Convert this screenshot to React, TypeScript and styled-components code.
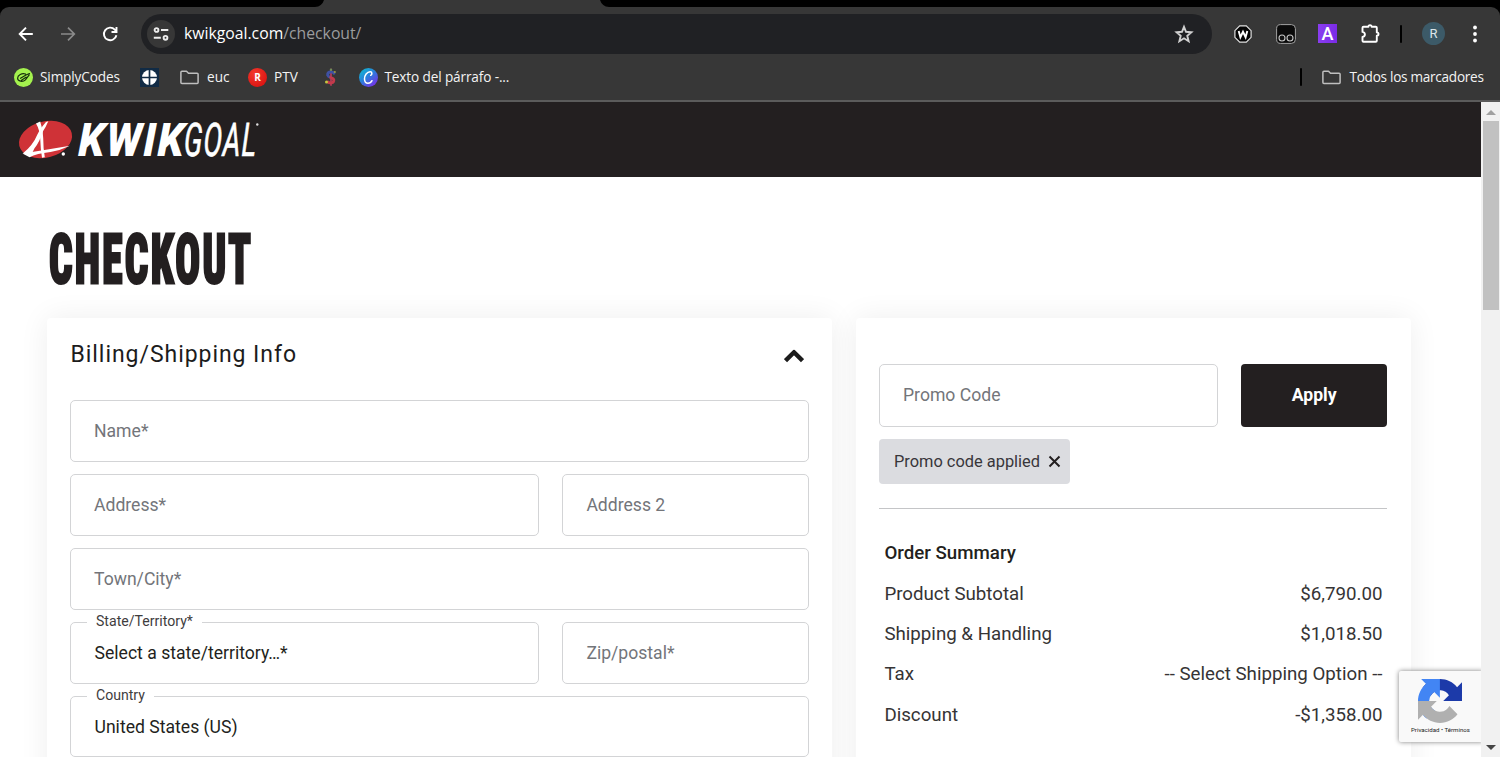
import React from 'react';
import styled, { createGlobalStyle } from 'styled-components';

const Global = createGlobalStyle`
  *, *::before, *::after { box-sizing: border-box; }
  html, body { margin: 0; height: 100%; overflow: hidden; }
  body { background: #fff; font-family: Roboto, "Liberation Sans", sans-serif; color: #231f20; }
`;

const Window = styled.div`
  width: 1500px;
  height: 757px;
  display: flex;
  flex-direction: column;
  overflow: hidden;
`;

/* ---------- browser chrome ---------- */
const TabStrip = styled.div`
  height: 7px;
  flex: none;
  background: #000;
  padding-left: 315px;
  display: flex;
`;
const Chrome = styled.div`
  flex: none;
  height: 95px;
  background: #000;
`;
const ChromeInner = styled.div`
  height: 95px;
  border-radius: 9px 9px 0 0;
  background: #373737;
  border-bottom: 2px solid #5b5b5b;
  font-family: "Open Sans", "Noto Sans", sans-serif;
  color: #fff;
`;
const Toolbar = styled.div`
  height: 53px;
  display: flex;
  align-items: center;
  padding: 0 15px 0 16px;
`;
const NavButtons = styled.div`
  display: flex;
  gap: 22px;
  width: 125px;
  svg { display: block; }
`;
const Omnibox = styled.div`
  width: 1071px;
  height: 40px;
  border-radius: 20px;
  background: #202124;
  display: flex;
  align-items: center;
  padding: 0 18px 0 6px;
`;
const SiteChip = styled.span`
  width: 28px;
  height: 28px;
  border-radius: 50%;
  background: #373737;
  display: grid;
  place-items: center;
  margin-right: 9px;
`;
const Url = styled.span`
  flex: 1;
  margin-top: -1px;
  font-size: 15.75px;
  line-height: 22px;
  color: #9b9c9e;
  b { font-weight: 400; color: #fff; }
`;
const Extensions = styled.div`
  display: flex;
  align-items: center;
  gap: 22.5px;
  padding-left: 21px;
  svg { display: block; }
`;
const ProfileArea = styled.div`
  flex: 1;
  display: flex;
  align-items: center;
  justify-content: flex-end;
  gap: 20px;
  svg { display: block; }
`;
const LetterTile = styled.span`
  width: 19px;
  height: 19px;
  background: linear-gradient(90deg, #8a3df0, #7a2be6);
  font: 500 18px/20px Roboto, sans-serif;
  text-align: center;
`;
const Divider = styled.span`
  width: 2px;
  height: 18px;
  border-radius: 1px;
  background: #000;
`;
const Avatar = styled.span`
  width: 23px;
  height: 23px;
  border-radius: 50%;
  background: #3c5a68;
  color: #dbe6ea;
  font: 400 13px/23px Roboto, sans-serif;
  text-align: center;
`;
const Bookmarks = styled.div`
  height: 34px;
  display: flex;
  align-items: center;
  padding: 0 16px 0 14px;
`;
const Bookmark = styled.div<{ $gap?: number; $end?: number }>`
  display: flex;
  align-items: center;
  gap: ${p => p.$gap ?? 7}px;
  margin-right: ${p => p.$end ?? 20}px;
  svg { display: block; flex: none; }
`;
const BookmarkLabel = styled.span<{ $w: number; $ls?: number }>`
  width: ${p => p.$w}px;
  font-size: 13.6px;
  line-height: 20px;
  margin-top: -1px;
  white-space: nowrap;
  letter-spacing: ${p => p.$ls ?? 0}px;
  color: #f3f3f3;
`;
const Spacer = styled.span`flex: 1;`;
const RoundR = styled.span`
  width: 19px;
  height: 19px;
  border-radius: 50%;
  background: radial-gradient(circle at 35% 30%, #f2382c, #d60b0b);
  font: 700 10px/19px "Open Sans", sans-serif;
  text-align: center;
`;

/* ---------- page ---------- */
const Viewport = styled.div`
  flex: 1;
  min-height: 0;
  display: flex;
`;
const Page = styled.div`
  position: relative;
  width: 1481px;
  overflow: hidden;
`;
const Header = styled.header`
  height: 75px;
  background: #231f20;
  padding: 5px 0 0 14px;
  svg { display: block; }
`;
const Title = styled.h1`
  margin: 43px 0 0 48.5px;
  height: 98px;
  width: 360px;
  font-size: 69px;
  line-height: 80px;
  font-weight: 800;
  font-stretch: 75%;
  letter-spacing: 3.8px;
  -webkit-text-stroke: 3.2px #231f20;
  transform: scaleX(0.598);
  transform-origin: 0 0;
`;
const Columns = styled.div`
  display: flex;
  align-items: flex-start;
  gap: 24px;
  padding-left: 47px;
`;
const Card = styled.section<{ $w: number; $top: number }>`
  width: ${p => p.$w}px;
  height: 520px;
  padding: ${p => p.$top}px 23px 0;
  background: #fff;
  border-radius: 4px;
  box-shadow: 0 0 30px rgba(0, 0, 0, 0.07);
`;
const CardHead = styled.div`
  height: 82px;
  display: flex;
  justify-content: space-between;
  padding: 0 5px 0 0.5px;
  svg { margin-top: 30px; }
`;
const CardTitle = styled.h2`
  margin: 22px 0 0;
  font-size: 23px;
  line-height: 29px;
  font-weight: 450;
  letter-spacing: 0.95px;
  color: #1c1c1c;
`;
const Form = styled.div`
  display: flex;
  flex-direction: column;
  gap: 12px;
`;
const Row = styled.div`
  display: grid;
  grid-template-columns: 469.4px 1fr;
  gap: 23px;
`;
const Field = styled.div<{ $filled?: boolean }>`
  position: relative;
  height: 61.9px;
  border: 1px solid #d3d4d6;
  border-radius: 5px;
  padding-left: ${p => (p.$filled ? 23.5 : 23)}px;
  font-size: 17.6px;
  line-height: 60px;
  color: ${p => (p.$filled ? '#231f20' : '#73757a')};
  background: #fff;
`;
const FloatLabel = styled.span`
  position: absolute;
  left: 16px;
  top: -11px;
  padding: 0 9px;
  background: #fff;
  font-size: 14.1px;
  line-height: 18px;
  color: #3f3d3e;
`;
const PromoRow = styled.div`
  display: grid;
  grid-template-columns: 339px 146.4px;
  gap: 23px;
  ${Field} { height: 62.4px; }
`;
const ApplyButton = styled.button`
  height: 62.4px;
  border: 0;
  border-radius: 4px;
  background: #231f20;
  color: #fff;
  font: 700 17.6px/61px Roboto, sans-serif;
  padding: 0;
`;
const PromoChip = styled.div`
  margin-top: 12px;
  width: 191px;
  height: 45px;
  border-radius: 4px;
  background: #dbdce0;
  padding-left: 15px;
  display: flex;
  align-items: center;
  gap: 8px;
  font-size: 16.4px;
  color: #38363a;
`;
const Rule = styled.div`
  margin-top: 24px;
  height: 1px;
  width: 508.4px;
  background: #c4c5c7;
`;
const Summary = styled.div`
  margin-top: 24.4px;
  padding: 0 5px 0 5.4px;
  width: 508.5px;
`;
const SummaryRow = styled.div<{ $strong?: boolean }>`
  height: 40.35px;
  display: flex;
  justify-content: space-between;
  font-size: 18.72px;
  line-height: 40px;
  font-weight: ${p => (p.$strong ? 500 : 400)};
  color: ${p => (p.$strong ? '#231f20' : '#363435')};
`;
const Captcha = styled.div`
  position: absolute;
  left: 1399px;
  top: 569px;
  width: 84px;
  height: 71px;
  background: #f9f9f9;
  border-radius: 2px 0 0 2px;
  box-shadow: 0 0 5px #808080;
  padding: 8px 0 0 19px;
  svg { display: block; }
`;
const CaptchaText = styled.div`
  width: 64px;
  margin: 2px 0 0 -7px;
  font-size: 6.1px;
  line-height: 9px;
  white-space: nowrap;
  color: #222;
`;
const Scrollbar = styled.div`
  width: 19px;
  background: #f1f1f1;
  display: flex;
  flex-direction: column;
  align-items: center;
  padding: 8px 0 7px;
`;
const Thumb = styled.div`
  margin: 6px 0 auto;
  width: 16px;
  height: 189px;
  background: #c1c1c1;
`;
const Arrow = styled.span<{ $down?: boolean }>`
  border: 5px solid transparent;
  border-top-width: ${p => (p.$down ? 5 : 0)}px;
  border-bottom-width: ${p => (p.$down ? 0 : 5)}px;
  border-top-color: ${p => (p.$down ? '#454545' : 'transparent')};
  border-bottom-color: ${p => (p.$down ? 'transparent' : '#a0a0a0')};
`;

const FolderIcon = () => (
  <svg width="19" height="19" viewBox="0 0 19 19" fill="none" stroke="#bfbfbf" strokeWidth="1.5" strokeLinejoin="round">
    <path d="M.9 14.6V4.2q0-1 1-1h4.6l2 2.1h8.6q1 0 1 1v8.2q0 1-1 1H1.9q-1 0-1-.9z" />
  </svg>
);

const Logo = () => (
  <svg width="260" height="70" viewBox="14 107 260 70">
    <g transform="rotate(-14 45.5 139.5)">
      <ellipse cx="45.5" cy="139.5" rx="27" ry="18" fill="#cf3237" />
    </g>
    <g fill="#fff">
      <path d="M46 122l2.300-.8q-2.800 6.500-5.300 10-3.500 11-8.500 17l-4 8.300-7.500-3.200q10-8 14.500-19 2.500-5.500 8.500-12.300z" />
      <path d="M36 123.500l4.200-1.900q3 8.400 3 16.400 0 10 1.600 19.200l-2.800.5q-1.500-9.500-1.700-17.700-.3-10-4.300-16.500z" />
      <path d="M22.500 153.500q23-3.500 47.500-7.700-9.500 4.600-19.500 6.200-14 1.500-21 5.200z" />
      <circle cx="63.300" cy="154" r="1.700" />
    </g>
    <text transform="translate(78 156.300) skewX(-2)" fontFamily="Roboto" fontSize="46.5" fontWeight="900" fontStyle="italic" letterSpacing="1.8" textLength="107" lengthAdjust="spacingAndGlyphs" fill="#fff">KWIK</text>
    <text transform="translate(183.500 156.300) skewX(-2)" fontFamily="Roboto" fontSize="46.500" fontWeight="400" fontStyle="italic" letterSpacing="2" textLength="73.500" lengthAdjust="spacingAndGlyphs" fill="#fff" stroke="#fff" strokeWidth=".7">GOAL</text>
    <circle cx="257.300" cy="124.500" r="1.200" fill="#ddd" />
  </svg>
);

export default function App() {
  return (
    <Window>
      <Global />
      <TabStrip>
        <svg width="294" height="7" viewBox="0 0 294 7">
          <path d="M0 7Q7 6.500 9 0H285Q287 6.500 294 7z" fill="#373737" />
        </svg>
      </TabStrip>
      <Chrome>
        <ChromeInner>
          <Toolbar>
            <NavButtons>
              <svg width="20" height="20" viewBox="0 0 20 20" fill="none" stroke="#fff" strokeWidth="1.9"><path d="M16.800 10H4M10 3.700 3.700 10l6.300 6.300" /></svg>
              <svg width="20" height="20" viewBox="0 0 20 20" fill="none" stroke="#8b8b8b" strokeWidth="1.700"><path d="M3 10h12.800M10 3.700l6.300 6.300-6.300 6.300" /></svg>
              <svg width="20" height="20" viewBox="0 0 20 20" fill="none" stroke="#fff" strokeWidth="1.900"><path d="M16.400 11.200A6.300 6.300 0 1 1 14.800 5.600L16.300 7.300M16.500 3v5h-5" /></svg>
            </NavButtons>
            <Omnibox>
              <SiteChip>
                <svg width="16" height="14" viewBox="0 0 16 14" fill="none" stroke="#eee" strokeWidth="1.900">
                  <circle cx="3.500" cy="3" r="1.900" /><path d="M8 3h7.300M.8 10.800h7" /><circle cx="12.500" cy="10.800" r="1.900" />
                </svg>
              </SiteChip>
              <Url><b>kwikgoal.com</b>/checkout/</Url>
              <svg width="20" height="20" viewBox="0 0 20 20" fill="none" stroke="#d0d0d0" strokeWidth="1.900">
                <path d="M10 2.800l2 5 5.400.4-4.100 3.600 1.300 5.400-4.600-2.900-4.600 2.900 1.300-5.400L2.600 8.200l5.400-.4z" />
              </svg>
            </Omnibox>
            <Extensions>
              <svg width="20" height="20" viewBox="-1 -1 20 20">
                <path d="M5.700.9h6.600l4.800 4.800v6.600l-4.800 4.800H5.700L.9 12.300V5.700z" fill="#050505" stroke="#e0e0e0" strokeWidth="1.200" />
                <path d="M4.700 6l1.700 6.200L9 6.800l2.600 5.400L13.300 6" fill="none" stroke="#fff" strokeWidth="1.900" />
              </svg>
              <svg width="20" height="20" viewBox="0 0 20 20">
                <rect x=".6" y=".6" width="18.800" height="18.800" rx="4" fill="#0a0a0a" stroke="#a2a2a2" />
                <circle cx="6" cy="14" r="3" fill="#111" stroke="#c4c4c4" strokeWidth="1.100" />
                <circle cx="14" cy="14" r="3" fill="#111" stroke="#c4c4c4" strokeWidth="1.100" />
              </svg>
              <LetterTile>A</LetterTile>
              <svg width="21" height="20" viewBox="0 0 21 20" fill="none" stroke="#fff" strokeWidth="1.900" strokeLinejoin="round">
                <path d="M3.500 2.700H8.400a1.600 1.600 0 0 1 3.200 0h4.200q1 0 1 1v4.700a1.700 1.700 0 0 1 0 3.400v5q0 1-1 1H3.500q-1 0-1-1v-3.900q2.400-.4 2.400-2.500T2.500 7.900V3.700q0-1 1-1z" />
              </svg>
            </Extensions>
            <ProfileArea>
              <Divider />
              <Avatar>R</Avatar>
              <svg width="20" height="20" viewBox="0 0 20 20" fill="#fff"><circle cx="10" cy="3.500" r="1.900" /><circle cx="10" cy="10" r="1.900" /><circle cx="10" cy="16.500" r="1.900" /></svg>
            </ProfileArea>
          </Toolbar>
          <Bookmarks>
            <Bookmark>
              <svg width="19" height="19" viewBox="0 0 19 19">
                <circle cx="9.500" cy="9.500" r="9.500" fill="#a4f24e" />
                <path d="M11.500 6C8 4.800 3.600 7 3.600 10.300c0 3.400 5.500 3.800 7.800 1.600l3.800-5M6.500 10.300l5.500-3.300 3.500-1.500M7.500 12.200l4.500-3" fill="none" stroke="#17300c" strokeWidth="1.200" strokeLinecap="round" />
              </svg>
              <BookmarkLabel $w={80} $ls={-0.12}>SimplyCodes</BookmarkLabel>
            </Bookmark>
            <Bookmark $end={21}>
              <svg width="19" height="19" viewBox="0 0 19 19">
                <rect width="19" height="19" fill="#112b45" /><circle cx="9.500" cy="9.500" r="7.500" fill="#fff" />
                <path d="M9.500 1v17M1 9.500h17" stroke="#112b45" strokeWidth="1.700" />
              </svg>
            </Bookmark>
            <Bookmark $gap={8}><FolderIcon /><BookmarkLabel $w={21}>euc</BookmarkLabel></Bookmark>
            <Bookmark $end={22}><RoundR>R</RoundR><BookmarkLabel $w={25}>PTV</BookmarkLabel></Bookmark>
            <Bookmark $end={18.5}>
              <svg width="19" height="19" viewBox="0 0 19 19" fill="none" strokeLinecap="round">
                <path d="M10 1.500v15.500" stroke="#a33a56" strokeWidth="2" />
                <path d="M13 5.200Q11.500 3.600 9 4T6.600 7.200q.5 1.600 3 2.300" stroke="#3f51a3" strokeWidth="2.800" />
                <path d="M9.600 9.500q3.700.8 3.200 3.200t-3.300 2.200q-1.700 0-2.800-1" stroke="#c33a4b" strokeWidth="2.800" />
                <circle cx="5.500" cy="14" r="1.500" fill="#c4c43e" /><circle cx="10" cy="1.800" r="1.200" fill="#6f8f58" /><circle cx="13.800" cy="4" r="1.100" fill="#9b9b46" />
              </svg>
            </Bookmark>
            <Bookmark>
              <svg width="19" height="19" viewBox="0 0 19 19">
                <defs><linearGradient id="canva" x1="0" y1="0" x2=".8" y2="1"><stop offset="0" stopColor="#0cc3cf" /><stop offset=".5" stopColor="#2a7fdc" /><stop offset="1" stopColor="#7c2ae8" /></linearGradient></defs>
                <circle cx="9.500" cy="9.500" r="9.500" fill="url(#canva)" />
                <path d="M11.700 7.300c1.600-.8 1.700-3.500-.4-3.600C8 3.600 5.400 7.600 5.500 11c.1 2.800 1.600 4.300 3.500 4.300 1.800 0 3.200-1 4-2.600" fill="none" stroke="#fff" strokeWidth="1.500" strokeLinecap="round" />
              </svg>
              <BookmarkLabel $w={126} $ls={-0.13}>Texto del párrafo -...</BookmarkLabel>
            </Bookmark>
            <Spacer />
            <Bookmark $gap={19.5} $end={9}><Divider /><FolderIcon /></Bookmark>
            <BookmarkLabel $w={134.5} $ls={-0.28}>Todos los marcadores</BookmarkLabel>
          </Bookmarks>
        </ChromeInner>
      </Chrome>
      <Viewport>
        <Page>
          <Header><Logo /></Header>
          <Title>CHECKOUT</Title>
          <Columns>
            <Card $w={785} $top={0}>
              <CardHead>
                <CardTitle>Billing/Shipping Info</CardTitle>
                <svg width="20" height="15" viewBox="0 0 20 15" fill="none" stroke="#1c1c1c" strokeWidth="4.400" strokeLinejoin="round"><path d="M1.500 12.700 10 4.200l8.500 8.500" /></svg>
              </CardHead>
              <Form>
                <Field>Name*</Field>
                <Row><Field>Address*</Field><Field>Address 2</Field></Row>
                <Field>Town/City*</Field>
                <Row>
                  <Field $filled><FloatLabel>State/Territory*</FloatLabel>Select a state/territory…*</Field>
                  <Field>Zip/postal*</Field>
                </Row>
                <Field $filled><FloatLabel>Country</FloatLabel>United States (US)</Field>
              </Form>
            </Card>
            <Card $w={555} $top={46.4}>
              <PromoRow><Field>Promo Code</Field><ApplyButton>Apply</ApplyButton></PromoRow>
              <PromoChip>
                Promo code applied
                <svg width="13" height="13" viewBox="0 0 13 13" stroke="#231f20" strokeWidth="2"><path d="M1.500 1.500l10 10M11.500 1.500l-10 10" /></svg>
              </PromoChip>
              <Rule />
              <Summary>
                <SummaryRow $strong>Order Summary</SummaryRow>
                <SummaryRow><span>Product Subtotal</span><span>$6,790.00</span></SummaryRow>
                <SummaryRow><span>Shipping &amp; Handling</span><span>$1,018.50</span></SummaryRow>
                <SummaryRow><span>Tax</span><span>-- Select Shipping Option --</span></SummaryRow>
                <SummaryRow><span>Discount</span><span>-$1,358.00</span></SummaryRow>
              </Summary>
            </Card>
          </Columns>
          <Captcha>
            <svg width="44" height="44" viewBox="0 0 64 64">
              <path fill="#1c3aa9" d="M64 31.955l-.033-1.370V4.687l-7.160 7.160C50.948 4.674 42.033.093 32.050.093c-10.400 0-19.622 4.960-25.458 12.640l11.736 11.860a15.550 15.550 0 0 1 4.754-5.334c2.050-1.600 4.952-2.906 8.968-2.906.485 0 .860.057 1.135.163 4.976.393 9.288 3.140 11.828 7.124l-8.307 8.307L64 31.953" />
              <path fill="#4285f4" d="M31.862.094l-1.370.033H4.594l7.160 7.160C4.580 13.147 0 22.060 0 32.046c0 10.400 4.960 19.622 12.640 25.458L24.500 45.768a15.550 15.550 0 0 1-5.334-4.754c-1.600-2.050-2.906-4.952-2.906-8.968 0-.485.057-.860.163-1.135.393-4.976 3.140-9.288 7.124-11.828l8.307 8.307L31.860.095" />
              <path fill="#b0b0b0" d="M.001 32.045l.033 1.370v25.898l7.160-7.160c5.860 7.173 14.774 11.754 24.760 11.754 10.400 0 19.622-4.960 25.458-12.640l-11.736-11.860a15.550 15.550 0 0 1-4.754 5.334c-2.050 1.600-4.952 2.906-8.968 2.906-.485 0-.860-.057-1.135-.163-4.976-.393-9.288-3.140-11.828-7.124l8.307-8.307c-10.522.040-22.400.066-27.295-.005" />
            </svg>
            <CaptchaText>Privacidad • Términos</CaptchaText>
          </Captcha>
        </Page>
        <Scrollbar>
          <Arrow />
          <Thumb />
          <Arrow $down />
        </Scrollbar>
      </Viewport>
    </Window>
  );
}
